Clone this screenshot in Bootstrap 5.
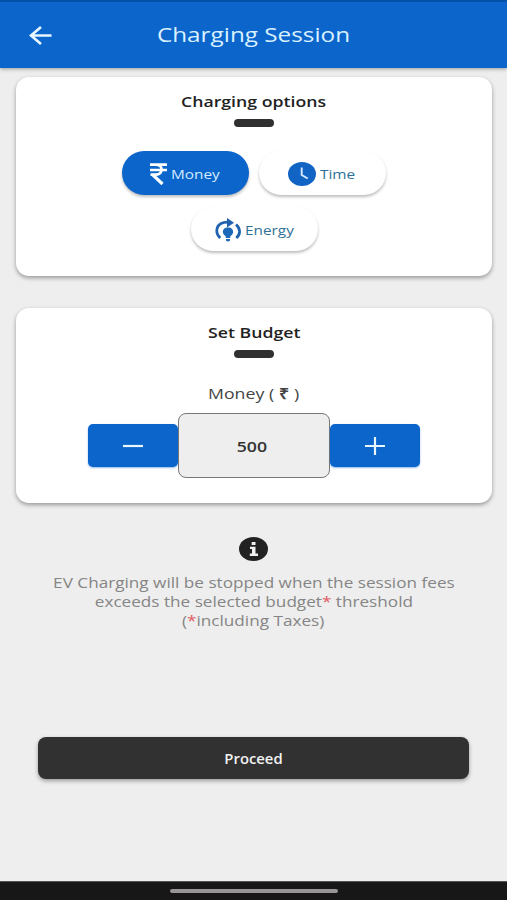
<!DOCTYPE html>
<html lang="en">
<head>
<meta charset="utf-8">
<meta name="viewport" content="width=device-width, initial-scale=1">
<title>Charging Session</title>
<link href="https://cdn.jsdelivr.net/npm/bootstrap@5.3.0/dist/css/bootstrap.min.css" rel="stylesheet">
<style>
  body { font-family: "Open Sans", sans-serif; background: #eee; height: 900px; overflow: hidden; color: #222; }
  svg { display: block; flex: none; }
  /* wide lettering */
  .wide { display: inline-block; transform: scaleX(1.18); white-space: nowrap; }
  .wide-start { transform-origin: left center; margin-left: 4px; }
  .app-bar { height: 68px; background: #0b65cb; border-top: 2px solid #0452a8; box-shadow: 0 1px 4px rgba(0,0,0,.35); padding: 0 28px 1px; }
  .app-title { font-size: 20px; line-height: 30px; color: #d9f1ff; }
  .app-title .wide { transform: scaleX(1.215); }
  .bar-side { width: 24px; }
  .panel { margin: 0 15px 0 16px; border: 0; border-radius: 13px; box-shadow: 0 2px 4px rgba(0,0,0,.36); }
  .panel-options { margin-top: 9px; height: 199px; padding-top: 12px; }
  .panel-budget { margin-top: 32px; height: 195px; padding-top: 12px; }
  .panel-title { font-size: 15px; line-height: 24px; font-weight: 600; margin: 0; }
  .rule { width: 40px; height: 8px; border-radius: 4px; background: #303030; margin-top: 6px; }
  .pills { width: 330px; margin-top: 24px; gap: 12px 10px; }
  .pill { width: 127px; height: 44px; border: 0; border-radius: 22px; padding: 2px 0 0; background: #fff; color: #2f7196; font-size: 13px; box-shadow: 0 2px 3px rgba(0,0,0,.26); }
  .pill:hover { background: #fff; color: #2f7196; }
  .pill.chosen, .pill.chosen:hover { background: #0b65cb; color: #d5ecff; }
  .pill .wide { padding-top: 1px; }
  .money-label { font-size: 15px; line-height: 22px; margin-top: 24px; color: #444; }
  .stepper { margin-top: 9px; }
  .step { width: 90px; height: 43px; border-radius: 5px; padding: 0; border: 0; background: #0b65cb; box-shadow: 0 1px 2px rgba(11,101,203,.45); }
  .amount { width: 152px; height: 65px; border: 1.5px solid #777; border-radius: 8px; background: #eee; padding: 1px 4px 0 0; font-size: 15px; font-weight: 600; color: #333; }
  .note { margin-top: 34px; font-size: 14px; line-height: 19px; color: #858585; }
  .note-text { margin-top: 12px; }
  .note-text .wide { transform: scaleX(1.225); }
  .star { color: #e05a5e; }
  .proceed { margin: 107px 38px 0; height: 42px; border: 0; border-radius: 8px; background: #313131; color: #f2f2f2; font-size: 14px; font-weight: 600; padding: 1px 0 0; box-shadow: 0 2px 4px rgba(0,0,0,.35); }
  .proceed .wide { transform: scaleX(1.06); }
  .system-bar { height: 19px; background: #171717; border-top: 1px solid #555; }
  .handle { width: 168px; height: 4px; border-radius: 2px; background: #999495; }
</style>
<script src="https://cdn.jsdelivr.net/npm/bootstrap@5.3.0/dist/js/bootstrap.bundle.min.js"></script>
</head>
<body class="d-flex flex-column">
<header class="app-bar d-flex align-items-center justify-content-between flex-shrink-0">
  <svg class="bar-side" width="24" height="20" viewBox="0 0 24 20" fill="none" stroke="#e8f6ff" stroke-width="2.6"><path d="M23.500 10.500H3M13 1.900 3 10.500l10 8.600"/></svg>
  <h1 class="app-title fw-normal m-0"><span class="wide">Charging Session</span></h1>
  <span class="bar-side"></span>
</header>

<main class="d-flex flex-column flex-grow-1">
  <section class="card panel panel-options align-items-center">
    <h2 class="panel-title"><span class="wide">Charging options</span></h2>
    <div class="rule"></div>
    <div class="pills d-flex flex-wrap justify-content-center">
      <button class="btn pill chosen d-flex align-items-center justify-content-start ps-4">
        <svg class="ms-1" width="17" height="22" viewBox="0 0 17 22" fill="none" stroke="#fff" stroke-width="2.7"><path d="M0 1.600h17M0 7h17M3 1.600h3c7.500 0 7.500 10 0 10H0.500"/><path d="M2.500 11.600 12.500 21" stroke-width="3.300"/></svg>
        <span class="wide wide-start">Money</span>
      </button>
      <button class="btn pill d-flex align-items-center justify-content-start ps-4">
        <svg class="ms-1" width="29" height="24" viewBox="-1 0 29 24"><ellipse cx="14" cy="12" rx="14" ry="12" fill="#1264c4"/><path d="M13.700 5.500V13l6 3.500" fill="none" stroke="#d7eaff" stroke-width="1.900"/></svg>
        <span class="wide wide-start">Time</span>
      </button>
      <button class="btn pill d-flex align-items-center justify-content-start ps-4">
        <svg width="26" height="24" viewBox="0 0 26 24"><path d="M5.200 20C-0.500 14.500 0.500 4 13 4.200M21 6.500c5 4.500 4.500 10 0.300 13.500" fill="none" stroke="#1f62ae" stroke-width="2.700"/><path d="M12 0l7 4.800-7 4.700z" fill="#1f62ae"/><path d="M13 9.500c-6.400 0-6.400 7-2.300 8.700V20h4.600v-1.800c4.100-1.700 4.100-8.700-2.300-8.700zM11 21h4v1.400q-2 2-4 0z" fill="#1b68b8"/></svg>
        <span class="wide wide-start">Energy</span>
      </button>
    </div>
  </section>

  <section class="card panel panel-budget align-items-center">
    <h2 class="panel-title"><span class="wide">Set Budget</span></h2>
    <div class="rule"></div>
    <div class="money-label"><span class="wide">Money ( <b>₹</b> )</span></div>
    <div class="stepper d-flex align-items-center">
      <button class="btn step d-flex align-items-center justify-content-center" aria-label="Decrease"><svg width="20" height="18" viewBox="0 0 20 18" stroke="#e9f5ff" stroke-width="2.200"><path d="M0 9h20"/></svg></button>
      <output class="amount d-flex align-items-center justify-content-center"><span class="wide">500</span></output>
      <button class="btn step d-flex align-items-center justify-content-center" aria-label="Increase"><svg width="20" height="18" viewBox="0 0 20 18" stroke="#e9f5ff" stroke-width="2.200"><path d="M0 9h20M10 0v18"/></svg></button>
    </div>
  </section>

  <section class="note text-center d-flex flex-column align-items-center">
    <svg width="29" height="24" viewBox="0 0 29 24"><ellipse cx="14.500" cy="12" rx="14.500" ry="12" fill="#222"/><path d="M12.700 5h3.800v3h-3.800zM11 9.800h5.500v6.700H19V19h-8.200v-2.500H13v-4.400h-2z" fill="#f2f2f2"/></svg>
    <div class="note-text">
      <span class="wide">EV Charging will be stopped when the session fees</span><br>
      <span class="wide">exceeds the selected budget<span class="star">*</span> threshold</span><br>
      <span class="wide">(<span class="star">*</span>including Taxes)</span>
    </div>
  </section>

  <button class="btn proceed"><span class="wide">Proceed</span></button>
</main>

<footer class="system-bar d-flex align-items-center justify-content-center flex-shrink-0"><div class="handle"></div></footer>
</body>
</html>
